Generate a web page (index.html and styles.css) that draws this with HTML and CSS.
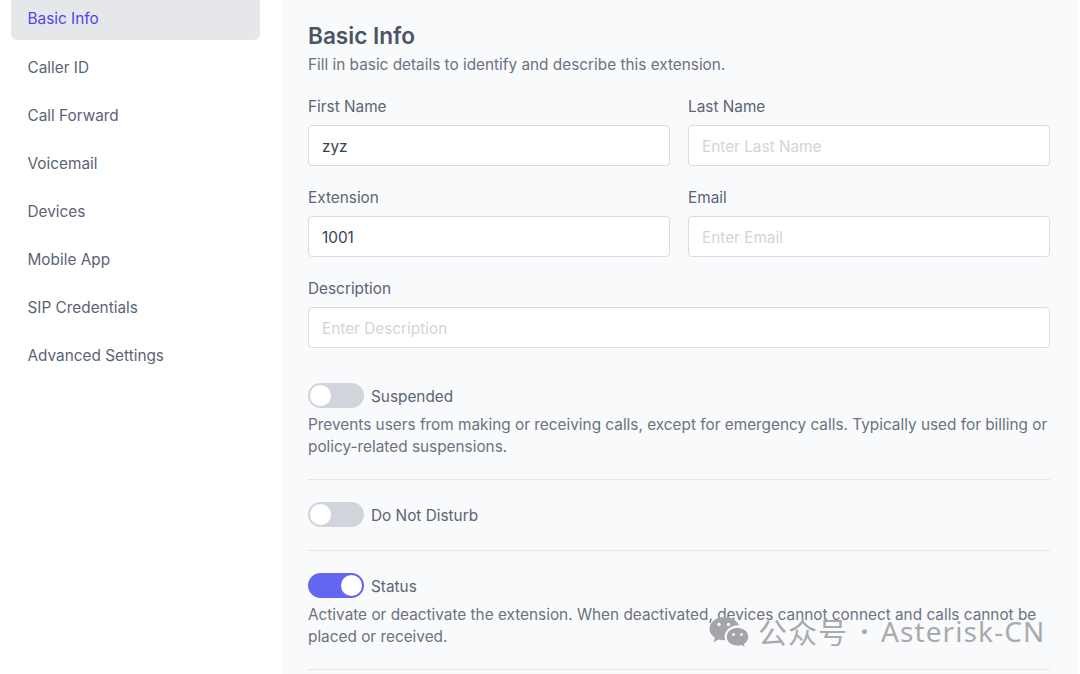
FILE: index.html
```html
<!DOCTYPE html>
<html lang="en">
<head>
    <meta charset="UTF-8">
    <meta name="viewport" content="width=device-width, initial-scale=1.0">
    <title>Basic Info</title>
    <link rel="stylesheet" href="styles.css">
</head>
<body>
    <aside class="sidebar">
        <a class="side-link active" href="#">Basic Info</a>
        <a class="side-link" href="#">Caller ID</a>
        <a class="side-link" href="#">Call Forward</a>
        <a class="side-link" href="#">Voicemail</a>
        <a class="side-link" href="#">Devices</a>
        <a class="side-link" href="#">Mobile App</a>
        <a class="side-link" href="#">SIP Credentials</a>
        <a class="side-link" href="#">Advanced Settings</a>
    </aside>

    <main class="panel">
        <h1>Basic Info</h1>
        <p class="intro">Fill in basic details to identify and describe this extension.</p>

        <div class="fields">
            <div class="field">
                <label>First Name</label>
                <input type="text" value="zyz" placeholder="Enter First Name">
            </div>
            <div class="field">
                <label>Last Name</label>
                <input type="text" placeholder="Enter Last Name">
            </div>
            <div class="field">
                <label>Extension</label>
                <input type="text" value="1001" placeholder="Enter Extension">
            </div>
            <div class="field">
                <label>Email</label>
                <input type="text" placeholder="Enter Email">
            </div>
            <div class="field wide">
                <label>Description</label>
                <input type="text" placeholder="Enter Description">
            </div>
        </div>

        <section class="setting first">
            <div class="toggle-row">
                <span class="toggle"></span>
                <span class="toggle-label">Suspended</span>
            </div>
            <p class="help">Prevents users from making or receiving calls, except for emergency calls. Typically used for billing or policy-related suspensions.</p>
        </section>

        <section class="setting plain">
            <div class="toggle-row">
                <span class="toggle"></span>
                <span class="toggle-label">Do Not Disturb</span>
            </div>
        </section>

        <section class="setting">
            <div class="toggle-row">
                <span class="toggle on"></span>
                <span class="toggle-label">Status</span>
            </div>
            <p class="help">Activate or deactivate the extension. When deactivated, devices cannot connect and calls cannot be placed or received.</p>
        </section>
    </main>

    <div class="watermark">
        <svg class="wechat" viewBox="0 0 40 32" width="40" height="32">
            <path class="bubble-back" d="M15 1C7 1 0.500 6.200 0.500 12.700c0 3.700 2.100 6.900 5.400 9.100l-1.400 4.400 5.100-2.700c1.800.5 3.700.8 5.600.8l1 0c-.4-1.200-.6-2.400-.6-3.700 0-6.300 6-11.300 13.400-11.300l.9 0C28.200 4.500 22.200 1 15 1z"/>
            <circle class="eye" cx="10" cy="8.500" r="1.800"/>
            <circle class="eye" cx="19.500" cy="8.500" r="1.800"/>
            <path class="bubble-front" d="M28.500 11.500c-6.200 0-11.200 4.200-11.200 9.300s5 9.300 11.200 9.300c1.400 0 2.700-.2 3.900-.6l4 2.300-1-3.700c2.700-1.700 4.300-4.400 4.300-7.300 0-5.100-5-9.300-11.200-9.300z"/>
            <circle class="eye" cx="24.500" cy="18.500" r="1.500"/>
            <circle class="eye" cx="32.500" cy="18.500" r="1.500"/>
        </svg>
        <span class="mark-cn">公众号</span>
        <span class="mark-dot">·</span>
        <span class="mark-en">Asterisk-CN</span>
    </div>
</body>
</html>
```

FILE: styles.css
```css
* {
    box-sizing: border-box;
    margin: 0;
    padding: 0;
}

html, body {
    height: 674px;
    overflow: hidden;
}

body {
    display: flex;
    font-family: 'Inter', 'Liberation Sans', sans-serif;
    font-size: 15.35px;
    color: #4b5563;
    background-color: #fff;
}

.sidebar {
    display: flex;
    flex-direction: column;
    gap: 4px;
    flex: 0 0 281px;
    margin-top: -4px;
    padding: 0 21px 0 11px;
}

.side-link {
    display: flex;
    align-items: center;
    height: 44px;
    padding: 2px 0 0 16.500px;
    color: #5b6472;
    text-decoration: none;
    border-radius: 6px;
}

.side-link.active {
    padding-top: 1px;
    color: #4f46e5;
    background-color: #e5e7eb;
}

.panel {
    flex: 0 0 797px;
    padding: 22px 28px 0 27px;
    background-color: #f9fafb;
    border-radius: 6px 0 0 0;
}

h1 {
    font-size: 22.600px;
    font-weight: 600;
    line-height: 28px;
    color: #4b5563;
}

.intro {
    margin-top: 3px;
    line-height: 24px;
    color: #6b7280;
}

.fields {
    display: grid;
    grid-template-columns: 1fr 1fr;
    column-gap: 18px;
    row-gap: 19px;
    margin-top: 17px;
}

.field label {
    display: block;
    margin: 1px 0 6px;
    line-height: 24px;
    color: #5b6472;
}

.field.wide {
    grid-column: 1 / 3;
}

.field input {
    display: block;
    width: 100%;
    height: 41px;
    padding: 1px 13px 0;
    font-family: inherit;
    font-size: 15.35px;
    color: #374151;
    background-color: #fff;
    border: 1px solid #d9dce1;
    border-radius: 4px;
}

.field input::placeholder {
    color: #d1d5db;
    opacity: 1;
}

.setting {
    padding: 22px 0;
    border-bottom: 1px solid #e5e7eb;
}

.setting.first {
    margin-top: 13px;
}

.setting.plain {
    padding-bottom: 23px;
}

.toggle-row {
    display: flex;
    align-items: center;
    gap: 7px;
    height: 25px;
}

.toggle-label {
    padding-top: 2px;
    color: #5b6472;
}

.toggle {
    position: relative;
    flex: 0 0 56px;
    height: 25px;
    background-color: #d1d5db;
    border-radius: 13px;
}

.toggle::after {
    content: "";
    position: absolute;
    top: 2px;
    left: 2px;
    width: 21px;
    height: 21px;
    background-color: #fff;
    border-radius: 50%;
}

.toggle.on {
    background-color: #6366f1;
}

.toggle.on::after {
    left: 33px;
}

.help {
    margin: 6px 0 -1px;
    line-height: 22px;
    color: #6b7280;
}

.watermark {
    position: absolute;
    left: 709px;
    top: 611px;
    display: flex;
    align-items: center;
    font-family: 'Noto Sans', 'Noto Sans CJK SC', sans-serif;
    line-height: 40px;
    color: #a9aaad;
}

.wechat {
    margin: 2px 9px 0 0;
}

.wechat .bubble-back,
.wechat .bubble-front {
    fill: #a4a5a8;
}

.wechat .bubble-front {
    stroke: #f9fafb;
    stroke-width: 1;
}

.wechat .eye {
    fill: #f1f2f3;
}

.mark-cn {
    font-family: 'Noto Sans CJK SC', sans-serif;
    font-size: 29px;
    letter-spacing: 1px;
}

.mark-dot {
    width: 33px;
    text-align: center;
    font-size: 28px;
    font-weight: 700;
}

.mark-en {
    font-size: 28px;
    letter-spacing: 1.1px;
}
```
